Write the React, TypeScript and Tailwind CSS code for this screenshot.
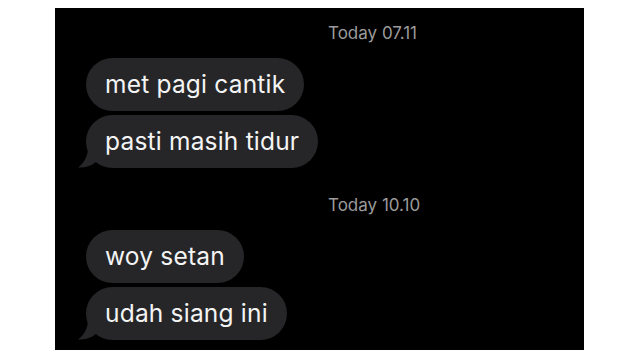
import React from 'react';

type Group = { time: string; timeOffset: string; messages: string[] };

const groups: Group[] = [
  { time: 'Today 07.11', timeOffset: 'pt-[15px]', messages: ['met pagi cantik', 'pasti masih tidur'] },
  { time: 'Today 10.10', timeOffset: 'pt-[27px]', messages: ['woy setan', 'udah siang ini'] },
];

function Tail() {
  return (
    <svg
      className="absolute left-[-8px] bottom-0"
      width="24"
      height="20"
      viewBox="0 0 24 20"
    >
      <path d="M10 0 C10 8 6 15 0 19.5 C6 20 13 18 18 14 L24 14 L24 0 Z" fill="#262628" />
    </svg>
  );
}

function Bubble({ text, last }: { text: string; last: boolean }) {
  return (
    <div className="relative self-start">
      {last && <Tail />}
      <div className="relative h-[53px] px-[19px] flex items-center rounded-full bg-[#262628] text-[#f4f4f4] text-[24.5px] tracking-[0.2px]">
        {text}
      </div>
    </div>
  );
}

export default function App() {
  return (
    <div className="w-[640px] h-[360px] bg-white pt-[8px] pl-[55px]">
      <div className="w-[529px] h-[342px] bg-black pl-[31px] font-['Inter',sans-serif]">
        {groups.map((g) => (
          <div key={g.time} className={`flex flex-col ${g.timeOffset}`}>
            <div className="ml-[242px] text-[17px] leading-[20px] text-[#9b9b9b]">{g.time}</div>
            <div className="flex flex-col gap-[4px] mt-[15px]">
              {g.messages.map((m, i) => (
                <Bubble key={m} text={m} last={i === g.messages.length - 1} />
              ))}
            </div>
          </div>
        ))}
      </div>
    </div>
  );
}
